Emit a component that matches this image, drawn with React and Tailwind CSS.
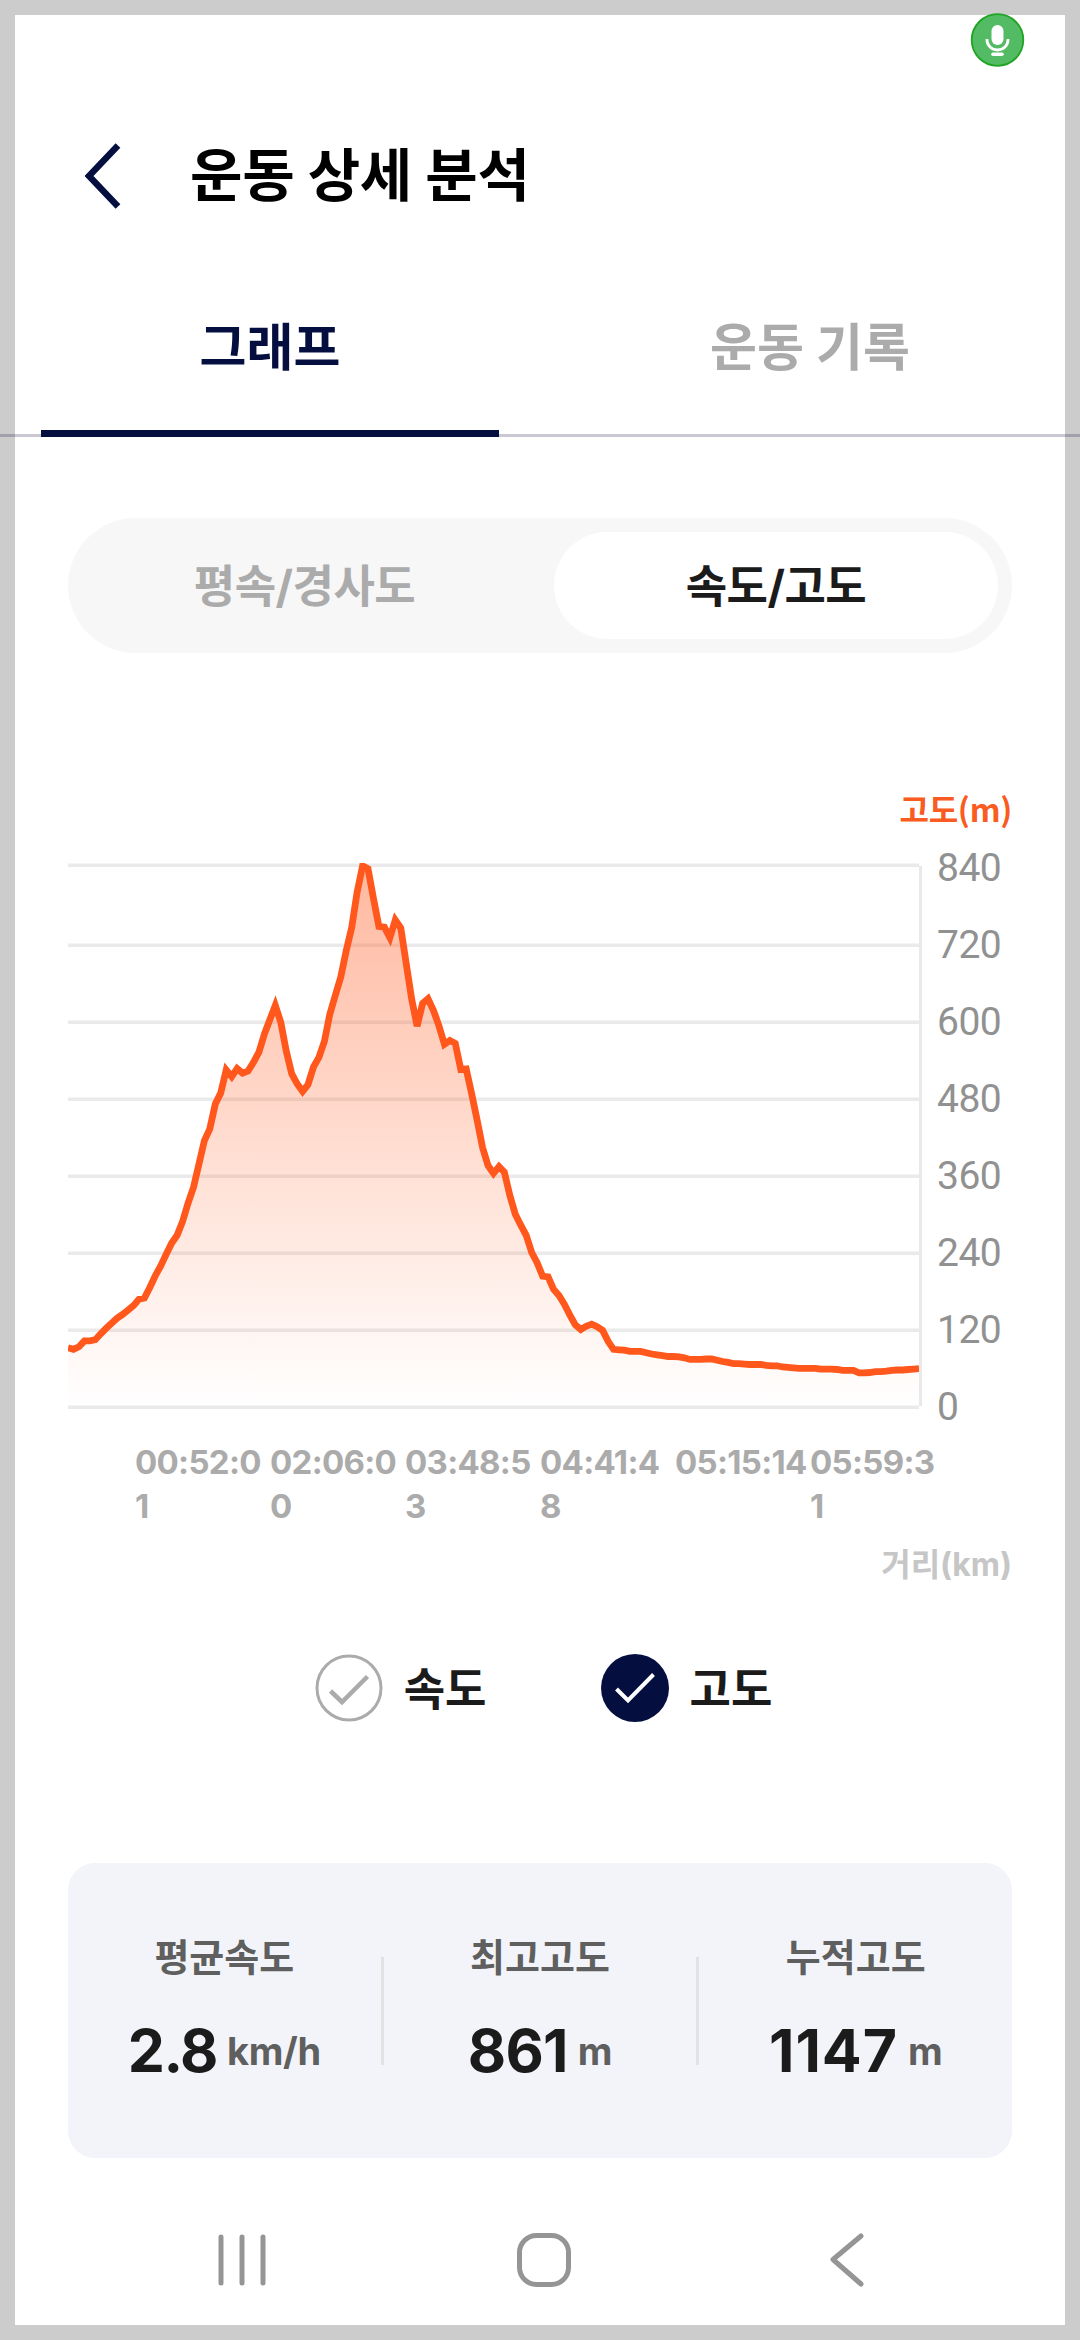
import React from "react";

// Height samples along the route, 183 units for every 120 m
const track = [
  141, 137, 143, 157, 157, 160, 174, 187, 199, 211, 220, 230, 241, 256, 259, 284, 312, 335, 363, 389,
  408, 441, 484, 522, 577, 633, 661, 720, 746, 801, 785, 804, 793, 798, 819, 843, 886, 920, 954, 914,
  846, 792, 768, 750, 766, 808, 831, 869, 933, 978, 1022, 1084, 1139, 1223, 1286, 1279, 1208, 1142, 1140, 1115,
  1157, 1138, 1054, 969, 905, 959, 970, 942, 906, 862, 871, 864, 802, 803, 744, 682, 616, 574, 555, 571,
  558, 502, 458, 432, 408, 367, 343, 311, 309, 280, 265, 244, 218, 195, 184, 192, 197, 191, 182, 156,
  137, 136, 135, 132, 132, 132, 129, 126, 124, 122, 120, 120, 119, 117, 113, 113, 113, 114, 114, 111,
  108, 106, 103, 103, 102, 101, 101, 101, 99, 98, 98, 95, 94, 93, 92, 92, 92, 92, 90, 90,
  90, 89, 87, 87, 87, 81, 81, 82, 84, 84, 85, 87, 88, 88, 89, 90, 91,
];

const altitudes = [840, 720, 600, 480, 360, 240, 120, 0];
const gridLines = [2, 82, 159, 236, 313, 390, 467, 544];
const times = ["00:52:01", "02:06:00", "03:48:53", "04:41:48", "05:15:14", "05:59:31"];

const stats = [
  { label: "평균속도", value: "2.8", unit: "km/h", spacing: "tracking-[-1.500px]" },
  { label: "최고고도", value: "861", unit: "m", spacing: "tracking-[-0.700px]" },
  { label: "누적고도", value: "1147", unit: "m", spacing: "tracking-[1px]" },
];

const Chart = () => {
  const step = 851 / (track.length - 1);
  const points = track.map((v, i) => `${(i * step).toFixed(1)},${(544 - v / 2.376).toFixed(1)}`);

  return (
    <svg width="854" height="546" viewBox="0 0 854 546" className="block shrink-0">
      <defs>
        <linearGradient id="altitude" x1="0" y1="0" x2="0" y2="1">
          <stop offset="0" stopColor="#ff571c" stopOpacity="0.42" />
          <stop offset="1" stopColor="#ff571c" stopOpacity="0" />
        </linearGradient>
      </defs>
      {gridLines.map((y) => (
        <rect key={y} x="0" y={y - 1.5} width="851" height="3.500" fill="#eaeaea" />
      ))}
      <rect x="851" y="3" width="3" height="540" fill="#e9e9e9" />
      <svg width="851" height="546">
        <polygon points={`0,544 ${points.join(" ")} 851,544`} fill="url(#altitude)" />
        <polyline points={points.join(" ")} fill="none" stroke="#ff571c" strokeWidth="6.800" />
      </svg>
    </svg>
  );
};

const Check = ({ label, active }) => (
  <div className="flex items-center gap-[21px]">
    <svg width="68" height="68" viewBox="0 0 68 68" fill="none">
      {active ? (
        <>
          <circle cx="34" cy="34" r="34" fill="#040f40" />
          <path d="M15.500 35L27 46.500L52.500 20.500" stroke="#fff" strokeWidth="4" />
        </>
      ) : (
        <>
          <circle cx="34" cy="34" r="32" stroke="#ababab" strokeWidth="3" />
          <path d="M15.500 37L27 48L52.500 22.500" stroke="#ababab" strokeWidth="4.500" />
        </>
      )}
    </svg>
    <span className="pt-[3px] text-[45px] leading-[65px] font-bold text-[#1b1b1b]">{label}</span>
  </div>
);

const App = () => {
  return (
    <div className="relative h-[2340px] w-[1080px] overflow-hidden bg-white font-['Inter','Noto_Sans_CJK_KR',sans-serif]">
      {/* Screen frame */}
      <div className="pointer-events-none absolute inset-0 border-[15px] border-[#cccccc]" />

      {/* Recording badge */}
      <svg className="absolute top-[13px] left-[970px]" width="55" height="54" viewBox="0 0 55 54" fill="none">
        <circle cx="27.500" cy="27" r="25.800" fill="#53bb63" stroke="#1fa424" strokeWidth="1.800" />
        <rect x="21.500" y="12" width="12" height="20" rx="6" fill="#fff" />
        <path d="M17 26v1a10.500 10 0 0 0 21 0V26" stroke="#fff" strokeWidth="2.800" />
        <path d="M23 41.200h9" stroke="#fff" strokeWidth="3.500" strokeLinecap="round" />
      </svg>

      <div className="flex h-full flex-col">
        <header className="flex h-[290px] items-center pt-[61px] pl-[85px]">
          <svg width="37" height="66" viewBox="0 0 37 66" fill="none">
            <path d="M33 2.500L4 33L33 63.500" stroke="#040f40" strokeWidth="6.500" />
          </svg>
          <h1 className="ml-[68px] text-[57px] leading-[80px] font-bold tracking-[-0.250px] text-black">운동 상세 분석</h1>
        </header>

        {/* Tabs */}
        <nav className="relative flex h-[147px] border-b-[3px] border-[#120538]/22 text-[51px] font-bold">
          <div className="flex flex-1 items-center justify-center pb-[28px] text-[#040f40]">그래프</div>
          <div className="flex flex-1 items-center justify-center pb-[28px] text-[#ababab]">운동 기록</div>
          <div className="absolute bottom-[-3px] left-[41px] h-[7px] w-[458px] bg-[#040f40]" />
        </nav>

        <main className="px-[68px]">
          <div className="mt-[81px] flex h-[135px] gap-[27px] rounded-full bg-[#f7f7f7] p-[14px] text-[45px] font-bold tracking-[-0.500px]">
            <div className="flex flex-1 items-center justify-center pt-[2px] text-[#ababab]">평속/경사도</div>
            <div className="flex w-[444px] items-center justify-center rounded-full bg-white pt-[2px] text-[#1b1b1b]">
              속도/고도
            </div>
          </div>

          <p className="mt-[131px] text-right font-['Noto_Sans_CJK_KR',sans-serif] text-[32px] leading-[48px] font-bold tracking-[-0.300px] text-[#f95b20]">
            고도(m)
          </p>

          <div className="mt-[31px] flex h-[546px]">
            <Chart />
            <div className="-mt-[33px] ml-[15px] font-['Roboto',sans-serif] text-[39px] leading-[77px] tracking-[-0.500px] text-[#919191]">
              {altitudes.map((a) => (
                <p key={a}>{a}</p>
              ))}
            </div>
          </div>

          <div className="mt-[31px] ml-[67px] flex h-[88px] text-[33px] leading-[44px] font-bold tracking-[-0.700px] text-[#ababab]">
            {times.map((t) => (
              <p key={t} className="w-[135px] break-all">{t}</p>
            ))}
          </div>
          <p className="mt-[13px] text-right text-[32px] leading-[48px] font-bold text-[#c6c6c6]">거리(km)</p>

          <div className="mt-[65px] flex justify-center gap-[114px] pl-[7px]">
            <Check label="속도" />
            <Check label="고도" active />
          </div>

          <section className="mt-[141px] flex h-[295px] items-center rounded-[27px] bg-[#f3f4f9]">
            {stats.map((s, i) => (
              <React.Fragment key={s.label}>
                {i > 0 && <div className="h-[108px] w-[3px] bg-[#e1e2e3]" />}
                <div className="flex flex-1 flex-col items-center">
                  <p className="text-[38px] leading-[56px] font-semibold text-[#5f5f5f]">{s.label}</p>
                  <p className="mt-[30px] mb-[5px] flex gap-[10px] text-[59px] leading-[72px] font-bold text-[#1b1b1b]">
                    <span className={s.spacing}>{s.value}</span>
                    <span className="text-[38px] font-bold tracking-[-0.300px] text-[#5f5f5f]">{s.unit}</span>
                  </p>
                </div>
              </React.Fragment>
            ))}
          </section>
        </main>

        {/* System navigation */}
        <footer className="mt-[75px] flex pl-[218px]">
          <svg width="48" height="54" viewBox="0 0 48 54" stroke="#959595" strokeWidth="5" strokeLinecap="round">
            <path d="M3 4V50M24 4V50M45 4V50" />
          </svg>
          <svg className="ml-[251px]" width="54" height="54" viewBox="0 0 54 54" fill="none">
            <rect x="2.500" y="2.500" width="49" height="49" rx="17" stroke="#959595" strokeWidth="5" />
          </svg>
          <svg className="ml-[259px]" width="34" height="54" viewBox="0 0 34 54" fill="none">
            <path d="M31 3L3 26.500L31 51" stroke="#959595" strokeWidth="5" strokeLinecap="round" strokeLinejoin="round" />
          </svg>
        </footer>
      </div>
    </div>
  );
};

export default App;
